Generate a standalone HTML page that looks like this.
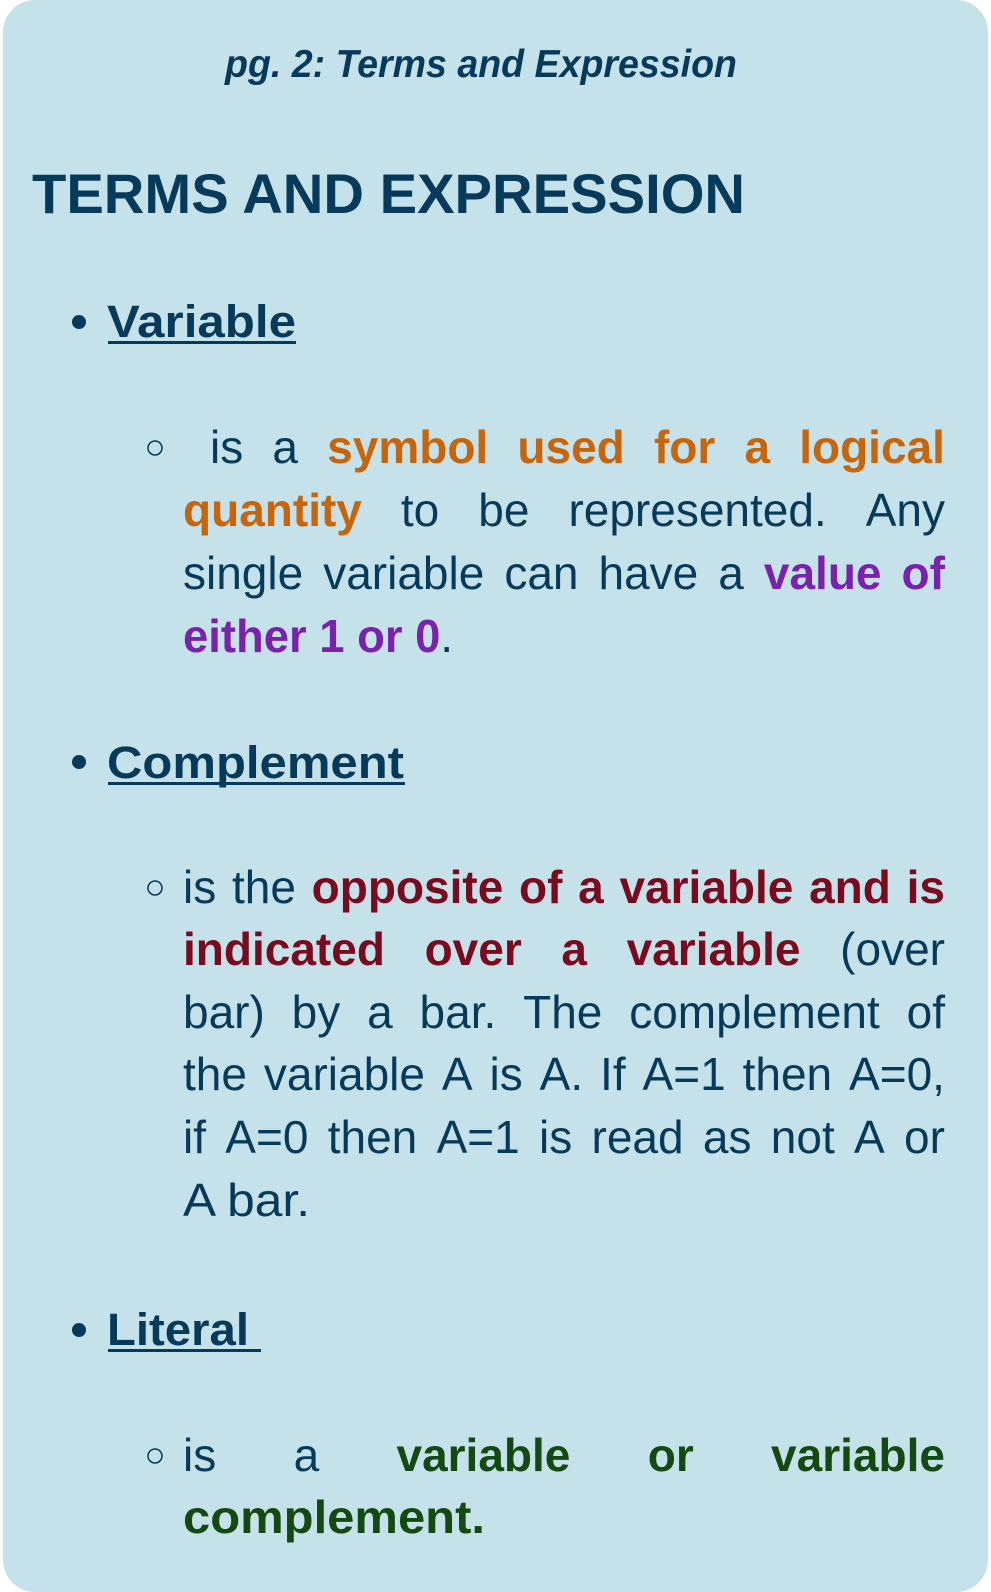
<!DOCTYPE html>
<html><head><meta charset="utf-8"><style>
html,body{margin:0;padding:0;background:#fff;}
body{width:991px;height:1592px;position:relative;overflow:hidden;font-family:"Liberation Sans",sans-serif;}
.card{position:absolute;left:3px;top:0;width:985px;height:1592px;background:#c5e1e9;border-radius:32px;}
.ln{position:absolute;left:183px;width:762px;height:46px;font-size:46px;line-height:46px;display:flex;justify-content:space-between;color:#053a5a;white-space:nowrap;}
.o{color:#c8650a;font-weight:bold}
.p{color:#7a22ae;font-weight:bold}
.m{color:#7a0a1e;font-weight:bold}
.g{color:#124a12;font-weight:bold}
svg{position:absolute;left:0;top:0}
</style></head><body>
<div class="card"></div>
<svg width="991" height="1592" xmlns="http://www.w3.org/2000/svg">
<g fill="#053a5a" font-family="Liberation Sans, sans-serif">
<text x="225" y="77" font-size="39" font-weight="bold" font-style="italic" textLength="512" lengthAdjust="spacingAndGlyphs">pg. 2: Terms and Expression</text>
<text x="32" y="213" font-size="56" font-weight="bold" textLength="713" lengthAdjust="spacingAndGlyphs">TERMS AND EXPRESSION</text>
<circle cx="79" cy="322" r="7"/>
<text x="107" y="337" font-size="45" font-weight="bold" textLength="189" lengthAdjust="spacingAndGlyphs">Variable</text>
<rect x="108" y="341" width="188" height="3"/>
<circle cx="79" cy="762" r="7"/>
<text x="107" y="778" font-size="45" font-weight="bold" textLength="297" lengthAdjust="spacingAndGlyphs">Complement</text>
<rect x="108" y="782" width="297" height="3"/>
<circle cx="79" cy="1330" r="7"/>
<text x="107" y="1345" font-size="45" font-weight="bold" textLength="142" lengthAdjust="spacingAndGlyphs">Literal</text>
<rect x="108" y="1349" width="153" height="3"/>
<g fill="none" stroke="#053a5a" stroke-width="1.5">
<circle cx="155" cy="448" r="7"/><circle cx="155" cy="888" r="7"/><circle cx="155" cy="1456" r="7"/>
</g>
<text x="183" y="652" font-size="46" font-weight="bold" fill="#7a22ae" textLength="270" lengthAdjust="spacingAndGlyphs">either 1 or 0<tspan fill="#053a5a" font-weight="normal">.</tspan></text>
<text x="183" y="1216" font-size="46" textLength="127" lengthAdjust="spacingAndGlyphs">A bar.</text>
<text x="183" y="1533" font-size="46" font-weight="bold" fill="#124a12" textLength="302" lengthAdjust="spacingAndGlyphs">complement.</text>
</g>
</svg>
<div class="ln" style="top:424px;left:210px;width:735px"><span>is</span><span>a</span><span class="o">symbol</span><span class="o">used</span><span class="o">for</span><span class="o">a</span><span class="o">logical</span></div>
<div class="ln" style="top:487px"><span class="o">quantity</span><span>to</span><span>be</span><span>represented.</span><span>Any</span></div>
<div class="ln" style="top:550px"><span>single</span><span>variable</span><span>can</span><span>have</span><span>a</span><span class="p">value</span><span class="p">of</span></div>
<div class="ln" style="top:864px"><span>is</span><span>the</span><span class="m">opposite</span><span class="m">of</span><span class="m">a</span><span class="m">variable</span><span class="m">and</span><span class="m">is</span></div>
<div class="ln" style="top:926px"><span class="m">indicated</span><span class="m">over</span><span class="m">a</span><span class="m">variable</span><span>(over</span></div>
<div class="ln" style="top:989px"><span>bar)</span><span>by</span><span>a</span><span>bar.</span><span>The</span><span>complement</span><span>of</span></div>
<div class="ln" style="top:1051px"><span>the</span><span>variable</span><span>A</span><span>is</span><span>A.</span><span>If</span><span>A=1</span><span>then</span><span>A=0,</span></div>
<div class="ln" style="top:1114px"><span>if</span><span>A=0</span><span>then</span><span>A=1</span><span>is</span><span>read</span><span>as</span><span>not</span><span>A</span><span>or</span></div>
<div class="ln" style="top:1432px"><span>is</span><span>a</span><span class="g">variable</span><span class="g">or</span><span class="g">variable</span></div>
</body></html>
